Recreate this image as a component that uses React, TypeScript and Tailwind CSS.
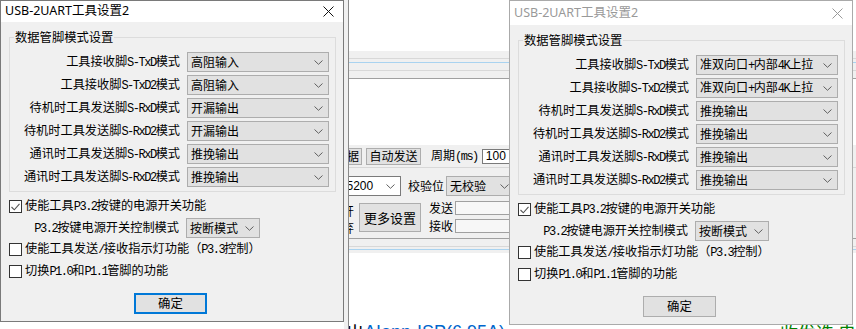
import React from "react";

function Mixed({ text }: { text: string }) {
  const parts = text.split(/([\x21-\x7e]+)/).filter((p) => p.length > 0);
  return (
    <>
      {parts.map((p, i) =>
        /^[\x21-\x7e]+$/.test(p) ? (
          <span key={i} className="font-['Liberation_Mono',monospace] text-[12px] tracking-[-1.5px]">
            {p}
          </span>
        ) : (
          <span key={i}>{p}</span>
        )
      )}
    </>
  );
}

function Chevron() {
  return (
    <svg width="9" height="5" viewBox="0 0 9 5" className="shrink-0">
      <path d="M0.5 0.5L4.5 4.3L8.5 0.5" fill="none" stroke="#606060" strokeWidth="1" />
    </svg>
  );
}

function Combo({ value, className }: { value: string; className: string }) {
  return (
    <div
      className={`flex h-[20px] shrink-0 items-center justify-between border border-[#adadad] bg-[#e1e1e1] pl-[3px] pr-[5px] ${className}`}
    >
      <span className="whitespace-nowrap text-[12px] leading-none">
        <Mixed text={value} />
      </span>
      <Chevron />
    </div>
  );
}

function Check({ checked, text, className }: { checked: boolean; text: string; className: string }) {
  return (
    <div className={`ml-[8px] flex h-[13px] items-center gap-[3px] ${className}`}>
      <div className="flex h-[13px] w-[13px] shrink-0 items-center justify-center border border-[#333333] bg-white">
        {checked && (
          <svg width="9" height="8" viewBox="0 0 9 8">
            <path d="M0.5 4L3.3 6.8L8.5 0.8" fill="none" stroke="#555555" strokeWidth="1.1" />
          </svg>
        )}
      </div>
      <span className="whitespace-nowrap leading-[13px]">
        <Mixed text={text} />
      </span>
    </div>
  );
}

const LABELS = [
  "工具接收脚S-TxD模式",
  "工具接收脚S-TxD2模式",
  "待机时工具发送脚S-RxD模式",
  "待机时工具发送脚S-RxD2模式",
  "通讯时工具发送脚S-RxD模式",
  "通讯时工具发送脚S-RxD2模式",
];

function Dialog({ active, values }: { active: boolean; values: string[] }) {
  return (
    <div
      className={`flex h-full w-[344px] flex-col border bg-[#f0f0f0] text-[12.2px] text-black ${
        active ? "border-[#7a7a7a]" : "border-[#aaaaaa]"
      }`}
    >
      <div
        className={`flex shrink-0 items-center justify-between bg-white pl-[4px] pr-[9px] ${
          active ? "h-[21px]" : "h-[24px]"
        }`}
      >
        <span
          className={`font-['Noto_Sans','Noto_Sans_CJK_SC',sans-serif] text-[12.5px] leading-none ${
            active ? "text-black" : "text-[#999999]"
          }`}
        >
          USB-2UART工具设置2
        </span>
        <svg width="11" height="11" viewBox="0 0 11 11">
          <path
            d="M0.5 0.5L10.5 10.5M10.5 0.5L0.5 10.5"
            stroke={active ? "#111111" : "#999999"}
            strokeWidth="1"
          />
        </svg>
      </div>
      <div className="flex flex-1 flex-col">
        <fieldset className="ml-[8px] mt-[8px] w-[327px] border border-[#dcdcdc] pb-[4px] pl-[4px]">
          <legend className="px-[1px] text-[12.3px] leading-[14px]">数据管脚模式设置</legend>
          <div className="mt-[8px] flex flex-col gap-[3px]">
            {LABELS.map((l, i) => (
              <div key={i} className="flex h-[20px] items-center gap-[7px]">
                <div className="w-[166px] whitespace-nowrap text-right leading-[20px]">
                  <Mixed text={l} />
                </div>
                <Combo value={values[i]} className="w-[142px]" />
              </div>
            ))}
          </div>
        </fieldset>
        <Check checked={true} text="使能工具P3.2按键的电源开关功能" className="mt-[8px]" />
        <div className="mt-[5px] flex h-[20px] items-center gap-[7px]">
          <div className="w-[178px] whitespace-nowrap text-right leading-[20px]">
            <Mixed text="P3.2按键电源开关控制模式" />
          </div>
          <Combo value="按断模式" className="w-[74px]" />
        </div>
        <Check checked={false} text="使能工具发送/接收指示灯功能（P3.3控制）" className="mt-[5px]" />
        <Check checked={false} text="切换P1.0和P1.1管脚的功能" className="mt-[9px]" />
        <div
          className={`ml-[133px] mt-[15px] flex h-[21px] w-[73px] items-center justify-center bg-[#e1e1e1] text-[12.4px] ${
            active ? "border-2 border-[#0078d7]" : "border border-[#adadad]"
          }`}
        >
          确定
        </div>
      </div>
    </div>
  );
}

function Background() {
  return (
    <div className="absolute left-[344px] top-0 h-[329px] w-[512px] bg-[#f0f0f0] text-[12px] text-black">
      <div className="ml-[4px] flex h-full flex-col overflow-hidden border-l border-[#8a8a8a] bg-white">
        <div className="h-[51px] shrink-0 bg-white" />
        <div className="flex shrink-0 flex-col bg-[#f0f0f0]">
          <div className="h-[7px]" />
          <div className="h-px bg-[#d8d8d8]" />
          <div className="h-[3px]" />
          <div className="h-px bg-[#a9d3f0]" />
          <div className="h-[7px]" />
          <div className="h-px bg-[#d8d8d8]" />
          <div className="h-[7px]" />
          <div className="h-px bg-[#a0a0a0]" />
        </div>
        <div className="h-[66px] shrink-0 bg-white" />
        <div className="flex h-[22px] shrink-0 items-center bg-[#f0f0f0]">
          <div className="-ml-[17px] flex h-[17px] w-[30px] shrink-0 items-center justify-center border border-[#adadad] bg-[#e1e1e1] leading-none">
            数据
          </div>
          <div className="ml-[4px] flex h-[17px] w-[55px] shrink-0 items-center justify-center border border-[#adadad] bg-[#e1e1e1] leading-none">
            自动发送
          </div>
          <span className="ml-[10px] whitespace-nowrap leading-none">
            <Mixed text="周期(ms)" />
          </span>
          <div className="ml-[4px] flex h-[15px] w-[44px] shrink-0 items-center border border-[#7a7a7a] bg-white pl-[3px] font-['Liberation_Sans',sans-serif] text-[12px] leading-none">
            100
          </div>
        </div>
        <div className="h-px shrink-0 bg-[#d8d8d8]" />
        <div className="flex h-[70px] shrink-0 flex-col bg-[#f0f0f0]">
          <div className="mt-[8px] flex h-[20px] items-center">
            <div className="-ml-[20px] flex h-[20px] w-[72px] shrink-0 items-center justify-between border border-[#7a7a7a] bg-white pl-[4px] pr-[5px]">
              <span className="font-['Liberation_Sans',sans-serif] text-[12px] leading-none">115200</span>
              <Chevron />
            </div>
            <span className="ml-[7px] whitespace-nowrap leading-none">校验位</span>
            <div className="ml-[2px] flex h-[20px] w-[70px] shrink-0 items-center justify-between border border-[#adadad] bg-[#e1e1e1] pl-[3px] pr-[6px]">
              <span className="leading-none">无校验</span>
              <Chevron />
            </div>
          </div>
          <div className="mt-[4px] flex">
            <div className="flex w-[5px] shrink-0 flex-col overflow-hidden pt-[2px]">
              <span className="-ml-[7px] leading-[17px]">开</span>
              <span className="-ml-[7px] leading-[17px]">弃</span>
            </div>
            <div className="ml-[5px] mt-[3px] flex h-[29px] w-[62px] shrink-0 items-center justify-center border border-[#adadad] bg-[#e1e1e1] text-[13px] leading-none">
              更多设置
            </div>
            <div className="ml-[8px] flex flex-col gap-[3px]">
              <div className="flex h-[15px] items-center">
                <span className="leading-none">发送</span>
                <div className="ml-[2px] h-[14px] w-[60px] border border-[#a0a0a0] bg-[#f7f7f7]" />
              </div>
              <div className="flex h-[15px] items-center">
                <span className="leading-none">接收</span>
                <div className="ml-[2px] h-[14px] w-[60px] border border-[#a0a0a0] bg-[#f7f7f7]" />
              </div>
            </div>
          </div>
        </div>
        <div className="h-px shrink-0 bg-[#a0a0a0]" />
        <div className="flex shrink-0 flex-col bg-[#f0f0f0]">
          <div className="h-[7px]" />
          <div className="h-px bg-[#d8d8d8]" />
          <div className="h-[2px]" />
          <div className="h-px bg-[#a9d3f0]" />
          <div className="h-[3px]" />
        </div>
        <div className="flex-1 bg-white">
          <div className="-ml-[3px] mt-[70px] flex whitespace-nowrap text-[18px] leading-[18px]">
            <span>出</span>
            <span className="font-['Liberation_Sans',sans-serif] text-[#0066cc]">AIapp-ISP(6.95A)</span>
          </div>
        </div>
      </div>
    </div>
  );
}

export default function App() {
  return (
    <div className="relative h-[329px] w-[856px] overflow-hidden bg-white font-['Noto_Sans_CJK_SC',sans-serif] text-black">
      <Background />
      <div className="absolute left-[780px] top-[323px] whitespace-nowrap text-[18px] leading-[18px] text-[#008000]">
        收发选 串[
      </div>
      <div className="absolute left-0 top-0 h-[322px]">
        <Dialog
          active={true}
          values={["高阻输入", "高阻输入", "开漏输出", "开漏输出", "推挽输出", "推挽输出"]}
        />
      </div>
      <div className="absolute left-[509px] top-0 h-[325px]">
        <Dialog
          active={false}
          values={[
            "准双向口+内部4K上拉",
            "准双向口+内部4K上拉",
            "推挽输出",
            "推挽输出",
            "推挽输出",
            "推挽输出",
          ]}
        />
      </div>
    </div>
  );
}
